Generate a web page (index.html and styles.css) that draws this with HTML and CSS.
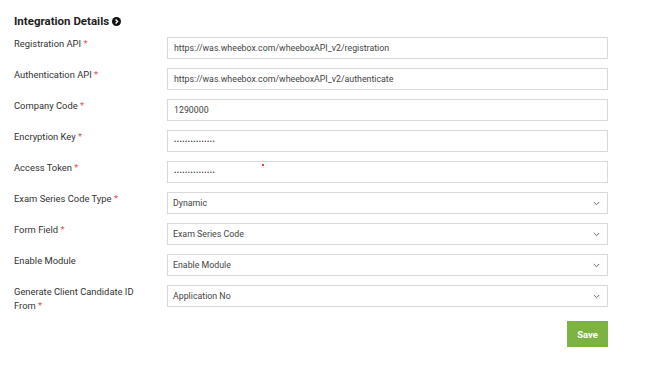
FILE: index.html
```html
<!DOCTYPE html>
<html>
<head>
<meta charset="utf-8">
<link rel="stylesheet" href="styles.css">
</head>
<body>
<div class="page">
  <h2 class="title">Integration Details <span class="title-icon"><svg width="9" height="9" viewBox="0 0 10 10"><circle cx="5" cy="5" r="5" fill="#111"/><path d="M4 2.8 L6.2 5 L4 7.2" stroke="#fff" stroke-width="1.6" fill="none"/></svg></span></h2>
  <form class="form">
    <label class="lbl">Registration API <span class="req">*</span></label>
    <div class="field"><span class="val">https://was.wheebox.com/wheeboxAPI_v2/registration</span></div>

    <label class="lbl">Authentication API <span class="req">*</span></label>
    <div class="field"><span class="val">https://was.wheebox.com/wheeboxAPI_v2/authenticate</span></div>

    <label class="lbl">Company Code <span class="req">*</span></label>
    <div class="field"><span class="val">1290000</span></div>

    <label class="lbl">Encryption Key <span class="req">*</span></label>
    <div class="field"><span class="val dots">•••••••••••••••</span></div>

    <label class="lbl">Access Token <span class="req">*</span></label>
    <div class="field"><span class="val dots">•••••••••••••••</span><span class="reddot"></span></div>

    <label class="lbl">Exam Series Code Type <span class="req">*</span></label>
    <div class="field select"><span class="val">Dynamic</span><svg class="chev" width="7" height="5" viewBox="0 0 7 5"><path d="M0.8 1 L3.5 3.7 L6.2 1" stroke="#666" stroke-width="1" fill="none"/></svg></div>

    <label class="lbl">Form Field <span class="req">*</span></label>
    <div class="field select"><span class="val">Exam Series Code</span><svg class="chev" width="7" height="5" viewBox="0 0 7 5"><path d="M0.8 1 L3.5 3.7 L6.2 1" stroke="#666" stroke-width="1" fill="none"/></svg></div>

    <label class="lbl">Enable Module</label>
    <div class="field select"><span class="val">Enable Module</span><svg class="chev" width="7" height="5" viewBox="0 0 7 5"><path d="M0.8 1 L3.5 3.7 L6.2 1" stroke="#666" stroke-width="1" fill="none"/></svg></div>

    <label class="lbl">Generate Client Candidate ID From <span class="req">*</span></label>
    <div class="field select"><span class="val">Application No</span><svg class="chev" width="7" height="5" viewBox="0 0 7 5"><path d="M0.8 1 L3.5 3.7 L6.2 1" stroke="#666" stroke-width="1" fill="none"/></svg></div>
  </form>
  <div class="actions"><button class="save" type="button">Save</button></div>
</div>
</body>
</html>
```
FILE: styles.css
```css
html, body {
  margin: 0;
  padding: 0;
  background: #fff;
}
body {
  font-family: Roboto, "Liberation Sans", sans-serif;
  color: #333;
}
.page {
  width: 608px;
  padding: 13px 0 0 14px;
  box-sizing: content-box;
}
.title {
  margin: 0;
  font-size: 11.5px;
  font-weight: 700;
  color: #222;
  line-height: 16px;
  display: flex;
  align-items: center;
  gap: 3px;
}
.title-icon { display: inline-flex; }
.form {
  margin-top: 8px;
  display: grid;
  grid-template-columns: 153px 441px;
  row-gap: 9px;
}
.lbl {
  font-size: 9.4px;
  line-height: 14px;
  color: #333;
  padding-right: 20px;
}
.req { color: #e05555; }
.field {
  height: 22px;
  box-sizing: border-box;
  border: 1px solid #d9d9d9;
  display: flex;
  align-items: center;
  padding: 0 6px;
  font-size: 8.8px;
  color: #444;
  position: relative;
}
.select { padding-left: 5px; justify-content: space-between; padding-right: 6px; }
.dots { font-size: 6.5px; letter-spacing: 0.55px; color: #333; padding-top: 1px; }
.chev { margin-right: 1px; }
.reddot {
  position: absolute;
  left: 94px;
  top: 2px;
  width: 2px;
  height: 2px;
  border-radius: 1px;
  background: #e00;
}
.actions {
  margin-top: 8px;
  width: 594px;
  display: flex;
  justify-content: flex-end;
}
.save {
  width: 41px;
  height: 26px;
  border: none;
  background: #7cb342;
  color: #fff;
  font-family: Roboto, "Liberation Sans", sans-serif;
  font-size: 9.5px;
  font-weight: 700;
  padding: 0;
}
```
